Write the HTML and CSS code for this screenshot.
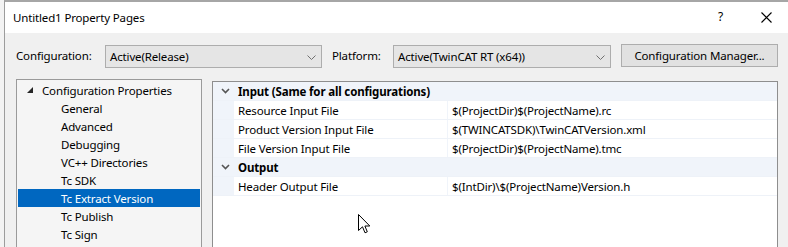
FILE: index.html
```html
<!DOCTYPE html>
<html>
<head>
<meta charset="utf-8">
<link rel="stylesheet" href="styles.css">
</head>
<body>
<div class="screen">
  <div class="window">
    <div class="titlebar">
      <span class="title">Untitled1 Property Pages</span>
      <span class="help">?</span>
      <svg class="close" width="11" height="11" viewBox="0 0 11 11"><path d="M0.5 0.5 L10.5 10.5 M10.5 0.5 L0.5 10.5" stroke="#000" stroke-width="1.1" fill="none"/></svg>
    </div>
    <div class="content">
      <div class="configrow">
        <span class="lbl lbl-config">Configuration:</span>
        <div class="combo combo-config">
          <span class="combo-text">Active(Release)</span>
          <svg class="combo-chev" width="9" height="5" viewBox="0 0 9 5"><path d="M0.5 0.5 L4.5 4.5 L8.5 0.5" stroke="#707070" stroke-width="1" fill="none"/></svg>
        </div>
        <span class="lbl lbl-platform">Platform:</span>
        <div class="combo combo-platform">
          <span class="combo-text">Active(TwinCAT RT (x64))</span>
          <svg class="combo-chev" width="9" height="5" viewBox="0 0 9 5"><path d="M0.5 0.5 L4.5 4.5 L8.5 0.5" stroke="#707070" stroke-width="1" fill="none"/></svg>
        </div>
        <div class="btn">Configuration Manager...</div>
      </div>
      <div class="main">
        <div class="tree">
          <div class="node node-root">
            <svg class="expander" width="6" height="6" viewBox="0 0 6 6"><polygon points="6,0 6,6 0,6" fill="#262626"/></svg>
            <span>Configuration Properties</span>
          </div>
          <div class="node node-child">General</div>
          <div class="node node-child">Advanced</div>
          <div class="node node-child">Debugging</div>
          <div class="node node-child">VC++ Directories</div>
          <div class="node node-child">Tc SDK</div>
          <div class="node node-child node-selected">Tc Extract Version</div>
          <div class="node node-child">Tc Publish</div>
          <div class="node node-child">Tc Sign</div>
        </div>
        <div class="grid">
          <div class="row row-cat">
            <div class="gutter"><svg width="9" height="6" viewBox="0 0 9 6"><path d="M1 1 L4.5 4.5 L8 1" stroke="#555" stroke-width="1.6" fill="none"/></svg></div>
            <div class="cat-name">Input (Same for all configurations)</div>
          </div>
          <div class="row row-prop">
            <div class="gutter"></div>
            <div class="pname">Resource Input File</div>
            <div class="pvalue">$(ProjectDir)$(ProjectName).rc</div>
          </div>
          <div class="row row-prop">
            <div class="gutter"></div>
            <div class="pname">Product Version Input File</div>
            <div class="pvalue">$(TWINCATSDK)\TwinCATVersion.xml</div>
          </div>
          <div class="row row-prop">
            <div class="gutter"></div>
            <div class="pname">File Version Input File</div>
            <div class="pvalue">$(ProjectDir)$(ProjectName).tmc</div>
          </div>
          <div class="row row-cat">
            <div class="gutter"><svg width="9" height="6" viewBox="0 0 9 6"><path d="M1 1 L4.5 4.5 L8 1" stroke="#555" stroke-width="1.6" fill="none"/></svg></div>
            <div class="cat-name">Output</div>
          </div>
          <div class="row row-prop">
            <div class="gutter"></div>
            <div class="pname">Header Output File</div>
            <div class="pvalue">$(IntDir)\$(ProjectName)Version.h</div>
          </div>
        </div>
      </div>
    </div>
  </div>
  <svg class="cursor" width="13" height="21" viewBox="0 0 13 21"><path d="M0.5 0.5 L0.5 16.5 L4.5 12.8 L7 18.8 L9.3 17.8 L6.9 12 L11.8 12 Z" fill="#fff" stroke="#000" stroke-width="1" stroke-linejoin="miter"/></svg>
</div>
</body>
</html>
```
FILE: styles.css
```css
* { box-sizing: border-box; }
html, body { margin: 0; padding: 0; }
body {
  width: 788px;
  height: 247px;
  overflow: hidden;
  background: #f3f3f3;
  font-family: "Noto Sans", "Open Sans", sans-serif;
  font-size: 11.5px;
  letter-spacing: -0.15px;
  color: #000;
}
.screen {
  position: relative;
  width: 788px;
  height: 247px;
  overflow: hidden;
}
.window {
  margin-left: 4px;
  height: 247px;
  border-left: 1px solid #9c9c9c;
  border-top: 2px solid #a6a6a6;
  background: #f0f0f0;
  display: flex;
  flex-direction: column;
}
.titlebar {
  height: 31px;
  background: #fff;
  display: flex;
  align-items: center;
  padding-left: 8px;
  flex-shrink: 0;
}
.title { flex: 1; padding-bottom: 1px; }
.help { width: 10px; margin-right: 33px; font-size: 12px; padding-bottom: 2px; }
.close { margin-right: 16px; margin-bottom: 1px; }
.content {
  padding: 11px 0 0 11px;
  flex: 1;
  display: flex;
  flex-direction: column;
  min-height: 0;
}
.configrow {
  height: 24px;
  display: flex;
  align-items: flex-start;
  flex-shrink: 0;
}
.lbl { line-height: 24px; }
.lbl-config { width: 89px; }
.lbl-platform { width: 61px; margin-left: 10px; }
.combo {
  margin-top: 1px;
  height: 23px;
  border: 1px solid #adadad;
  background: #e5e5e5;
  display: flex;
  align-items: center;
  padding-left: 4px;
  padding-right: 5px;
}
.combo-text { flex: 1; white-space: nowrap; }
.combo-chev { margin-top: 1px; }
.combo-config { width: 217px; }
.combo-platform { width: 218px; }
.btn {
  margin-left: 10px;
  width: 157px;
  height: 23px;
  border: 1px solid #adadad;
  background: #e1e1e1;
  display: flex;
  align-items: center;
  justify-content: center;
  white-space: nowrap;
}
.main {
  margin-top: 11px;
  display: flex;
  align-items: flex-start;
  flex: 1;
  min-height: 0;
}
.tree {
  width: 186px;
  height: 200px;
  border: 1px solid #9a9a9a;
  background: #f5f5f5;
  padding: 1px 1px 0 1px;
}
.node {
  height: 18px;
  display: flex;
  align-items: center;
  white-space: nowrap;
}
.node-root { padding-left: 9px; }
.expander { margin-right: 9px; }
.node-child { padding-left: 43px; }
.node-selected { background: #0067c0; color: #fff; }
.grid {
  margin-top: 2px;
  margin-left: 10px;
  width: 566px;
  height: 200px;
  border: 1px solid #8e8e8e;
  background: #fff;
}
.row {
  display: flex;
  height: 19px;
  border-bottom: 1px solid #eef2f8;
  background: #f0f4fa;
}
.gutter {
  width: 21px;
  flex-shrink: 0;
  display: flex;
  align-items: center;
  justify-content: center;
  padding-left: 3px;
}
.cat-name { font-weight: bold; padding-left: 4px; display: flex; align-items: center; }
.pname {
  width: 213px;
  background: #fff;
  padding-left: 4px;
  display: flex;
  align-items: center;
  white-space: nowrap;
}
.pvalue {
  flex: 1;
  margin-left: 1px;
  background: #fff;
  padding-left: 4px;
  display: flex;
  align-items: center;
  white-space: nowrap;
}
.cursor {
  position: absolute;
  left: 358px;
  top: 214px;
}
```
